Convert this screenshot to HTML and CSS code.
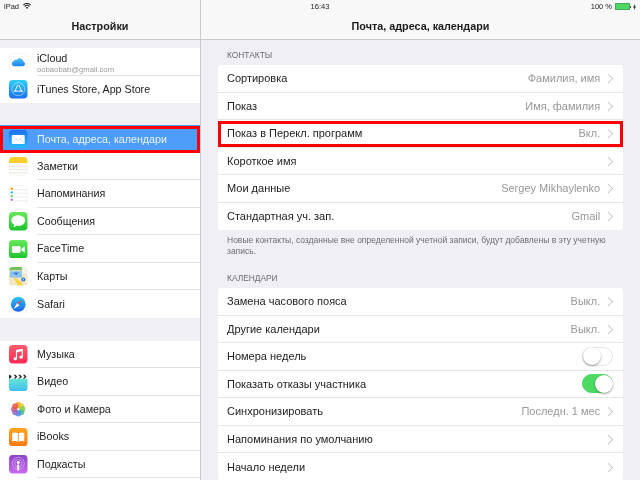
FILE: index.html

```html
<!DOCTYPE html>
<html lang="ru">
<head>
  <meta charset="UTF-8">
  <title>Настройки</title>
  <link rel="stylesheet" href="styles.css">
</head>
<body>

<div class="ipad">

  <div class="status">
    <div class="status-left">
      <span>iPad</span>
      <svg width="8" height="6.500" viewBox="0 0 10 8"><path d="M5 7.500 3.400 5.700a2.200 2.200 0 0 1 3.200 0zM2.500 4.800 1.600 3.800a4.800 4.800 0 0 1 6.800 0l-.9 1a3.500 3.500 0 0 0-5 0zM.9 3 0 2a7 7 0 0 1 10 0l-.9 1a5.800 5.800 0 0 0-8.200 0z" fill="#222"/></svg>
    </div>
    <div class="status-time">16:43</div>
    <div class="status-right">
      <span>100 %</span>
      <span class="battery"></span>
      <svg width="3" height="6" viewBox="0 0 3 6"><path d="M2 0 0 3.400h1.200L1 6l2-3.400H1.800z" fill="#222"/></svg>
    </div>
  </div>

  <div class="panes">

    <div class="sidebar">
      <div class="navbar">Настройки</div>

      <div class="side-group first">
        <div class="side-row">
          <svg class="icon" viewBox="0 0 20 20"><rect x=".3" y=".3" width="19.400" height="19.400" rx="4" fill="#fff" stroke="#e6e6e6" stroke-width=".5"/><defs><linearGradient id="cl" x1="0" y1="0" x2="0" y2="1"><stop offset="0" stop-color="#4fc3f7"/><stop offset="1" stop-color="#1a84f0"/></linearGradient></defs><path d="M5.500 14.200a2.700 2.700 0 0 1-.5-5.300 3 3 0 0 1 3.600-1.700 3.900 3.900 0 0 1 7 2.100 2.500 2.500 0 0 1-.6 4.900z" fill="url(#cl)"/></svg>
          <div class="side-label two">
            <span>iCloud</span>
            <small>oobaobab@gmail.com</small>
          </div>
        </div>
        <div class="side-row">
          <svg class="icon" viewBox="0 0 20 20"><defs><linearGradient id="as" x1="0" y1="0" x2="0" y2="1"><stop offset="0" stop-color="#2fd0fb"/><stop offset="1" stop-color="#1b6ef0"/></linearGradient></defs><rect width="20" height="20" rx="4" fill="url(#as)"/><circle cx="10" cy="10" r="7" fill="none" stroke="#fff" stroke-width=".6" opacity=".8"/><path d="M10.700 5.500 14 13M9.300 5.500 6 13M5 12h10" stroke="#fff" stroke-width="1" fill="none"/></svg>
          <div class="side-label">iTunes Store, App Store</div>
        </div>
      </div>

      <div class="side-group">
        <div class="side-row selected">
          <svg class="icon" viewBox="0 0 20 20"><defs><linearGradient id="ml" x1="0" y1="0" x2="0" y2="1"><stop offset="0" stop-color="#1e6ff0"/><stop offset="1" stop-color="#27bdf8"/></linearGradient></defs><rect width="20" height="20" rx="4" fill="url(#ml)"/><rect x="3" y="5.500" width="14" height="9.500" rx="1" fill="#fff"/><path d="M3.200 6 10 11l6.800-5M3.200 14.800 8 9.800M16.800 14.800 12 9.800" stroke="#9cc8f5" stroke-width=".5" fill="none"/></svg>
          <div class="side-label">Почта, адреса, календари</div>
        </div>
        <div class="side-row">
          <svg class="icon" viewBox="0 0 20 20"><rect x=".3" y=".3" width="19.400" height="19.400" rx="4" fill="#fbfbf8" stroke="#ececec" stroke-width=".5"/><path d="M0 4a4 4 0 0 1 4-4h12a4 4 0 0 1 4 4v2.500H0z" fill="#fdcf2e"/><path d="M0 10h20M0 13.500h20M0 17h20" stroke="#dcdcdc" stroke-width=".6"/></svg>
          <div class="side-label">Заметки</div>
        </div>
        <div class="side-row">
          <svg class="icon" viewBox="0 0 20 20"><rect x=".3" y=".3" width="19.400" height="19.400" rx="4" fill="#fff" stroke="#ececec" stroke-width=".5"/><path d="M6 5h14M6 9h14M6 13h14M6 17h14" stroke="#dcdcdc" stroke-width=".6"/><circle cx="3" cy="4" r="1.300" fill="#ff9500"/><circle cx="3" cy="8" r="1.300" fill="#2fb8f5"/><circle cx="3" cy="12" r="1.300" fill="#62d24a"/><circle cx="3" cy="16" r="1.300" fill="#c86ee0"/></svg>
          <div class="side-label">Напоминания</div>
        </div>
        <div class="side-row">
          <svg class="icon" viewBox="0 0 20 20"><defs><linearGradient id="gr" x1="0" y1="0" x2="0" y2="1"><stop offset="0" stop-color="#66e85a"/><stop offset="1" stop-color="#1cc52c"/></linearGradient></defs><rect width="20" height="20" rx="4" fill="url(#gr)"/><path d="M10 3.500c-4.200 0-7.500 2.500-7.500 5.700 0 2 1.300 3.700 3.300 4.700-.2 1-.8 1.800-1.500 2.400 1.500 0 2.900-.6 3.900-1.500.6.100 1.200.200 1.800.200 4.200 0 7.500-2.600 7.500-5.800S14.200 3.500 10 3.500z" fill="#fff"/></svg>
          <div class="side-label">Сообщения</div>
        </div>
        <div class="side-row">
          <svg class="icon" viewBox="0 0 20 20"><rect width="20" height="20" rx="4" fill="url(#gr)"/><rect x="3" y="6.500" width="9.500" height="7.500" rx="1.500" fill="#fff"/><path d="m13.300 9.500 3.700-2.700v6.900l-3.700-2.700z" fill="#fff"/></svg>
          <div class="side-label">FaceTime</div>
        </div>
        <div class="side-row">
          <svg class="icon" viewBox="0 0 20 20"><rect width="20" height="20" rx="4" fill="#f1e7c8"/><path d="M0 4a4 4 0 0 1 4-4h10v3.500H0z" fill="#76bf5e"/><path d="M14 0h2a4 4 0 0 1 4 4v3h-6z" fill="#f4f0ea"/><path d="M1 4.500h13v7H1z" fill="#8cc3ee"/><path d="M4 6h6.500L8 9z" fill="#3a7fd8"/><path d="M3 9.500 13 16l2 4h-5L5 12z" fill="#f6d543"/><circle cx="15.500" cy="13.500" r="2.200" fill="#2a76d8"/><path d="M15.500 12.500v2" stroke="#fff" stroke-width=".8"/></svg>
          <div class="side-label">Карты</div>
        </div>
        <div class="side-row">
          <svg class="icon" viewBox="0 0 20 20"><defs><linearGradient id="sf" x1="0" y1="0" x2="0" y2="1"><stop offset="0" stop-color="#2fc6f8"/><stop offset="1" stop-color="#1b62e8"/></linearGradient></defs><rect x=".3" y=".3" width="19.400" height="19.400" rx="4" fill="#fff" stroke="#ececec" stroke-width=".5"/><circle cx="10" cy="10" r="8" fill="url(#sf)"/><path d="m15 5-6.300 3.700L10 10z" fill="#f33"/><path d="M5 15l6.300-3.700L10 10 8.700 8.700z" fill="#fff"/></svg>
          <div class="side-label">Safari</div>
        </div>
      </div>

      <div class="side-group">
        <div class="side-row">
          <svg class="icon" viewBox="0 0 20 20"><defs><linearGradient id="mu" x1="0" y1="0" x2="0" y2="1"><stop offset="0" stop-color="#ff5d6c"/><stop offset="1" stop-color="#ff2a55"/></linearGradient></defs><rect width="20" height="20" rx="4" fill="url(#mu)"/><path d="M7.500 5.500 15 4v9.200a1.900 1.600 0 1 1-1.200-1.500V6.800l-5.100 1v7a1.900 1.600 0 1 1-1.200-1.500z" fill="#fff"/></svg>
          <div class="side-label">Музыка</div>
        </div>
        <div class="side-row">
          <svg class="icon" viewBox="0 0 20 20"><defs><linearGradient id="vd" x1="0" y1="0" x2="0" y2="1"><stop offset="0" stop-color="#68e6d0"/><stop offset="1" stop-color="#3fbcf8"/></linearGradient></defs><path d="M0 6h20v10a4 4 0 0 1-4 4H4a4 4 0 0 1-4-4z" fill="url(#vd)"/><path d="M0 1h20v5H0z" fill="#fff"/><path d="m1 2 2 2-2 2H0V2zM5 2h2l2 2-2 2H5l2-2zM10 2h2l2 2-2 2h-2l2-2zM15 2h2l2 2-2 2h-2l2-2z" fill="#222"/></svg>
          <div class="side-label">Видео</div>
        </div>
        <div class="side-row">
          <svg class="icon" viewBox="0 0 20 20"><rect x=".3" y=".3" width="19.400" height="19.400" rx="4" fill="#fff" stroke="#ececec" stroke-width=".5"/><circle cx="10" cy="5.500" r="3.300" fill="#f6a623" opacity=".9"/><circle cx="13.200" cy="6.800" r="3.300" fill="#dcd22e" opacity=".85"/><circle cx="14.500" cy="10" r="3.300" fill="#86cf4c" opacity=".85"/><circle cx="13.200" cy="13.200" r="3.300" fill="#4bbd9a" opacity=".85"/><circle cx="10" cy="14.500" r="3.300" fill="#4e8fe0" opacity=".85"/><circle cx="6.800" cy="13.200" r="3.300" fill="#8a6fd0" opacity=".85"/><circle cx="5.500" cy="10" r="3.300" fill="#c45a9c" opacity=".85"/><circle cx="6.800" cy="6.800" r="3.300" fill="#ee5a4a" opacity=".85"/></svg>
          <div class="side-label">Фото и Камера</div>
        </div>
        <div class="side-row">
          <svg class="icon" viewBox="0 0 20 20"><defs><linearGradient id="ib" x1="0" y1="0" x2="0" y2="1"><stop offset="0" stop-color="#ffa51f"/><stop offset="1" stop-color="#ff7a12"/></linearGradient></defs><rect width="20" height="20" rx="4" fill="url(#ib)"/><path d="M3.500 5.500c2-.8 4.500-.8 6 .3v9c-1.500-1-4-1-6-.3zM16.500 5.500c-2-.8-4.500-.8-6 .3v9c1.500-1 4-1 6-.3z" fill="#fff"/></svg>
          <div class="side-label">iBooks</div>
        </div>
        <div class="side-row">
          <svg class="icon" viewBox="0 0 20 20"><defs><linearGradient id="pd" x1="0" y1="0" x2="0" y2="1"><stop offset="0" stop-color="#8e45c8"/><stop offset="1" stop-color="#c66bf0"/></linearGradient></defs><rect width="20" height="20" rx="4" fill="url(#pd)"/><circle cx="10" cy="9" r="6.500" fill="none" stroke="#e6c6f8" stroke-width=".6"/><circle cx="10" cy="9" r="4" fill="none" stroke="#e6c6f8" stroke-width=".6"/><circle cx="10" cy="8" r="1.600" fill="#fff"/><rect x="9" y="10" width="2" height="7" rx="1" fill="#fff"/></svg>
          <div class="side-label">Подкасты</div>
        </div>
        <div class="side-row"></div>
      </div>
    </div>

    <div class="main">
      <div class="navbar">Почта, адреса, календари</div>

      <div class="section-title first">КОНТАКТЫ</div>
      <div class="card">
        <div class="row"><span class="row-name">Сортировка</span><span class="row-value">Фамилия, имя</span><i class="chevron"></i></div>
        <div class="row"><span class="row-name">Показ</span><span class="row-value">Имя, фамилия</span><i class="chevron"></i></div>
        <div class="row marked"><span class="row-name">Показ в Перекл. программ</span><span class="row-value">Вкл.</span><i class="chevron"></i></div>
        <div class="row"><span class="row-name">Короткое имя</span><i class="chevron"></i></div>
        <div class="row"><span class="row-name">Мои данные</span><span class="row-value">Sergey Mikhaylenko</span><i class="chevron"></i></div>
        <div class="row"><span class="row-name">Стандартная уч. зап.</span><span class="row-value">Gmail</span><i class="chevron"></i></div>
      </div>
      <div class="note">Новые контакты, созданные вне определенной учетной записи, будут добавлены в эту учетную запись.</div>

      <div class="section-title">КАЛЕНДАРИ</div>
      <div class="card">
        <div class="row"><span class="row-name">Замена часового пояса</span><span class="row-value">Выкл.</span><i class="chevron"></i></div>
        <div class="row"><span class="row-name">Другие календари</span><span class="row-value">Выкл.</span><i class="chevron"></i></div>
        <div class="row"><span class="row-name">Номера недель</span><span class="toggle"></span></div>
        <div class="row"><span class="row-name">Показать отказы участника</span><span class="toggle on"></span></div>
        <div class="row"><span class="row-name">Синхронизировать</span><span class="row-value">Последн. 1 мес</span><i class="chevron"></i></div>
        <div class="row"><span class="row-name">Напоминания по умолчанию</span><i class="chevron"></i></div>
        <div class="row"><span class="row-name">Начало недели</span><i class="chevron"></i></div>
      </div>
    </div>

  </div>
</div>

</body>
</html>
```

FILE: styles.css

```css
html, body {
  margin: 0;
  height: 100%;
  overflow: hidden;
}
body {
  font-family: "Liberation Sans", Arial, sans-serif;
  font-size: 10.700px;
  color: #222;
  background: #efeff4;
}
.ipad {
  position: relative;
  width: 640px;
  height: 480px;
  overflow: hidden;
  filter: blur(.25px);
}

/* status bar */
.status {
  position: absolute;
  top: 0;
  left: 0;
  right: 0;
  height: 13px;
  display: grid;
  grid-template-columns: 1fr auto 1fr;
  align-items: center;
  padding: 0 4px;
  font-size: 7.500px;
  color: #222;
  z-index: 2;
}
.status-left {
  display: flex;
  align-items: center;
  gap: 4px;
}
.status-right {
  display: flex;
  align-items: center;
  justify-content: flex-end;
  gap: 2px;
}
.battery {
  position: relative;
  width: 13px;
  height: 5px;
  background: #4cd964;
  border: .5px solid #4aa85c;
  margin: 0 1px;
}
.battery::after {
  content: "";
  position: absolute;
  right: -2px;
  top: 1.500px;
  width: 1px;
  height: 2px;
  background: #555;
}

/* panes */
.panes {
  display: flex;
  height: 480px;
}
.sidebar {
  width: 200px;
  flex: none;
  border-right: 1px solid #c9c9ce;
  background: #efeff4;
}
.main {
  flex: 1;
  min-width: 0;
  padding: 0 17px;
}
.navbar {
  height: 40px;
  padding-top: 13px;
  box-sizing: border-box;
  line-height: 27px;
  text-align: center;
  font-size: 10.800px;
  font-weight: bold;
  color: #1c1c1c;
  background: #f8f8f8;
  border-bottom: 1px solid #c9c9ce;
}
.main .navbar {
  margin: 0 -17px;
}

/* left list */
.side-group {
  background: #fff;
  margin-top: 23px;
}
.side-group.first {
  margin-top: 8px;
}
.side-group.first + .side-group {
  margin-top: 22px;
}
.side-row {
  position: relative;
  height: 27.500px;
  display: flex;
  align-items: center;
  padding-left: 9px;
  box-sizing: border-box;
}
.icon {
  width: 18.500px;
  height: 18.500px;
  flex: none;
  margin-right: 9.500px;
}
.side-label {
  flex: 1;
  height: 100%;
  display: flex;
  flex-direction: column;
  justify-content: center;
  border-bottom: 1px solid #e3e3e6;
  box-sizing: border-box;
  white-space: nowrap;
}
.side-row:last-child .side-label {
  border-bottom: 0;
}
.side-label.two {
  padding-top: 5px;
  line-height: 11px;
}
.side-label small {
  font-size: 7.700px;
  color: #999;
}
.side-row.selected {
  background: #4f9dfb;
  color: #eaf3ff;
}
.side-row.selected .side-label {
  border-bottom: 0;
}
.side-row.selected::after {
  content: "";
  position: absolute;
  top: 1px;
  bottom: -.5px;
  left: 0;
  right: 0;
  border: 3px solid #f00;
}

/* right list */
.section-title {
  font-size: 8.400px;
  color: #6d6d72;
  padding-left: 9px;
  margin: 17px 0 5px;
  line-height: 10px;
}
.section-title.first {
  margin-top: 10px;
}
.card {
  background: #fff;
  border-radius: 3px;
  overflow: hidden;
  font-size: 11px;
}
.row {
  height: 27.500px;
  display: flex;
  align-items: center;
  padding: 0 9px;
  box-sizing: border-box;
  border-bottom: 1px solid #e6e6e8;
  position: relative;
}
.row:last-child {
  border-bottom: 0;
}
.row-name {
  flex: 1;
}
.row-value {
  color: #98989c;
  margin-right: 5px;
}
.chevron {
  width: 5.500px;
  height: 5.500px;
  border-top: 1px solid #c7c7cc;
  border-right: 1px solid #c7c7cc;
  transform: rotate(45deg);
  margin-right: 2.300px;
}
.row.marked::after {
  content: "";
  position: absolute;
  top: 1px;
  bottom: 0;
  left: 0;
  right: 0;
  border: 3px solid #f00;
}
.note {
  font-size: 8.500px;
  line-height: 10.500px;
  color: #6d6d72;
  padding: 5px 9px 0;
}
.toggle {
  width: 31px;
  height: 19px;
  margin-right: 1px;
  border-radius: 10px;
  box-sizing: border-box;
  border: 1px solid #e5e5e5;
  background: #fff;
  position: relative;
}
.toggle::after {
  content: "";
  position: absolute;
  top: -.5px;
  left: -.5px;
  width: 18px;
  height: 18px;
  border-radius: 50%;
  background: #fff;
  box-shadow: 0 1px 2px rgba(0,0,0,.4);
}
.toggle.on {
  background: #4cd964;
  border-color: #4cd964;
}
.toggle.on::after {
  left: 12px;
}
```
